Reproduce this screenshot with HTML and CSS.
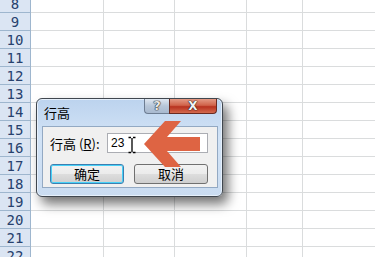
FILE: index.html
```html
<!DOCTYPE html>
<html lang="zh">
<head>
<meta charset="UTF-8">
<title>行高</title>
<link rel="stylesheet" href="styles.css">
</head>
<body>
<div class="sheet">
    <div class="row"><div class="num">8</div><div class="c c1"></div><div class="c c2"></div><div class="c c3"></div><div class="c c4"></div><div class="c c5"></div></div>
    <div class="row"><div class="num">9</div><div class="c c1"></div><div class="c c2"></div><div class="c c3"></div><div class="c c4"></div><div class="c c5"></div></div>
    <div class="row"><div class="num">10</div><div class="c c1"></div><div class="c c2"></div><div class="c c3"></div><div class="c c4"></div><div class="c c5"></div></div>
    <div class="row"><div class="num">11</div><div class="c c1"></div><div class="c c2"></div><div class="c c3"></div><div class="c c4"></div><div class="c c5"></div></div>
    <div class="row"><div class="num">12</div><div class="c c1"></div><div class="c c2"></div><div class="c c3"></div><div class="c c4"></div><div class="c c5"></div></div>
    <div class="row"><div class="num">13</div><div class="c c1"></div><div class="c c2"></div><div class="c c3"></div><div class="c c4"></div><div class="c c5"></div></div>
    <div class="row"><div class="num">14</div><div class="c c1"></div><div class="c c2"></div><div class="c c3"></div><div class="c c4"></div><div class="c c5"></div></div>
    <div class="row"><div class="num">15</div><div class="c c1"></div><div class="c c2"></div><div class="c c3"></div><div class="c c4"></div><div class="c c5"></div></div>
    <div class="row"><div class="num">16</div><div class="c c1"></div><div class="c c2"></div><div class="c c3"></div><div class="c c4"></div><div class="c c5"></div></div>
    <div class="row"><div class="num">17</div><div class="c c1"></div><div class="c c2"></div><div class="c c3"></div><div class="c c4"></div><div class="c c5"></div></div>
    <div class="row"><div class="num">18</div><div class="c c1"></div><div class="c c2"></div><div class="c c3"></div><div class="c c4"></div><div class="c c5"></div></div>
    <div class="row"><div class="num">19</div><div class="c c1"></div><div class="c c2"></div><div class="c c3"></div><div class="c c4"></div><div class="c c5"></div></div>
    <div class="row"><div class="num">20</div><div class="c c1"></div><div class="c c2"></div><div class="c c3"></div><div class="c c4"></div><div class="c c5"></div></div>
    <div class="row"><div class="num">21</div><div class="c c1"></div><div class="c c2"></div><div class="c c3"></div><div class="c c4"></div><div class="c c5"></div></div>
    <div class="row"><div class="num">22</div><div class="c c1"></div><div class="c c2"></div><div class="c c3"></div><div class="c c4"></div><div class="c c5"></div></div>
</div>

<div class="dialog">
    <div class="titlebar">
        <span class="title">行高</span>
        <div class="caption-btns">
            <div class="btn-help">?</div>
            <div class="btn-close">X</div>
        </div>
    </div>
    <div class="panel">
        <div class="field">
            <label for="height">行高 (<u>R</u>):</label>
            <input type="text" id="height" value="23">
        </div>
        <div class="actions">
            <button class="focused">确定</button>
            <button>取消</button>
        </div>
    </div>
</div>

<!-- flecha y cursor encima del dialogo -->
<svg class="overlay" width="375" height="257" viewBox="0 0 375 257">
    <path d="M128.5 137.5 H131 M133 137.5 H135.5 M132 138 V152 M128.5 152.5 H131 M133 152.5 H135.5" stroke="#000" stroke-width="1.3" fill="none"/>
    <path d="M144 144 L165 121 L181 121 L167 137 L200 137 L200 151 L167 151 L181 167 L165 167 Z" fill="#de6443"/>
</svg>
</body>
</html>
```

FILE: styles.css
```css
body {
    margin: 0;
    width: 375px;
    height: 257px;
    overflow: hidden;
    background: #fff;
    font-family: "Noto Sans CJK SC", "Liberation Sans", sans-serif;
    position: relative;
}

.sheet {
    margin-top: -5px;
}

.row {
    display: flex;
    height: 18px;
}

.num {
    width: 31px;
    flex: none;
    background-color: #dbe5f3;
    border-right: 1px solid #9eb6ce;
    border-bottom: 1px solid #9eb6ce;
    box-sizing: border-box;
    height: 18px;
    text-align: center;
    font-family: "DejaVu Sans Mono", monospace;
    font-size: 14px;
    line-height: 18px;
    color: #27416d;
}

.c {
    flex: none;
    height: 18px;
    box-sizing: border-box;
    border-right: 1px solid #dadcdd;
    border-bottom: 1px solid #dadcdd;
}

.c1 { width: 73px; }
.c2 { width: 71px; }
.c3 { width: 72px; }
.c4 { width: 56px; }
.c5 { flex: 1; border-right: none; }

.dialog {
    position: absolute;
    left: 36px;
    top: 98px;
    width: 187px;
    height: 99px;
    box-sizing: border-box;
    border: 1px solid #40474f;
    border-radius: 6px;
    background: linear-gradient(#bcd3ee, #d2e3f6 40%, #cadcf1);
    box-shadow: 5px 7px 12px rgba(0, 0, 0, 0.55), inset 0 0 0 1px #e6f0fb;
    padding: 0 4px 8px 5px;
    display: flex;
    flex-direction: column;
}

.titlebar {
    height: 27px;
    display: flex;
    justify-content: space-between;
    align-items: flex-start;
}

.title {
    font-size: 13px;
    color: #000;
    margin: 5px 0 0 2px;
    line-height: 17px;
}

.caption-btns {
    display: flex;
    margin-right: 1px;
}

.btn-help {
    width: 25px;
    height: 15px;
    box-sizing: border-box;
    border: 1px solid #6d7d92;
    border-top: none;
    border-right: none;
    border-radius: 0 0 0 4px;
    background: linear-gradient(#dfe7f1, #b7c6d8 50%, #a8b9cf);
    color: #e8e8e8;
    font-family: "DejaVu Sans", sans-serif;
    font-weight: bold;
    font-size: 13px;
    line-height: 14px;
    text-align: center;
    text-shadow: 0 0 1px #222, 0 0 1px #222, 0 0 1px #222;
}

.btn-close {
    width: 48px;
    height: 15px;
    box-sizing: border-box;
    border: 1px solid #6a2a20;
    border-top: none;
    border-radius: 0 0 4px 0;
    background: linear-gradient(#e49a85, #d0634a 45%, #b8321f 55%, #d36a4e);
    color: #f4f4f4;
    font-family: "DejaVu Sans", sans-serif;
    font-weight: bold;
    font-size: 12px;
    line-height: 14px;
    text-align: center;
    text-shadow: 0 0 1px #222, 0 0 1px #222, 0 0 1px #222;
}

.panel {
    flex: 1;
    background-color: #f0f0f0;
    border: 1px solid #93a9c3;
    padding: 6px 9px 0 7px;
}

.field {
    display: flex;
    align-items: center;
    height: 20px;
}

label {
    font-size: 13px;
    color: #000;
    width: 57px;
    white-space: nowrap;
}

input[type="text"] {
    width: 101px;
    height: 20px;
    box-sizing: border-box;
    border: 1px solid #abadb3;
    background-color: #fff;
    font-family: "Liberation Sans", sans-serif;
    font-size: 12px;
    padding: 0 3px;
    color: #000;
    outline: none;
}

.actions {
    display: flex;
    gap: 10px;
    margin-top: 11px;
}

button {
    width: 74px;
    height: 20px;
    box-sizing: border-box;
    border: 1px solid #707070;
    border-radius: 3px;
    background: linear-gradient(#f2f2f2, #ebebeb 50%, #dddddd 50%, #cfcfcf);
    font-family: "Noto Sans CJK SC", sans-serif;
    font-size: 13px;
    line-height: 16px;
    color: #000;
    padding: 0;
}

button.focused {
    border-color: #3c7fb1;
    box-shadow: inset 0 0 0 1px #48d1f7;
}

.overlay {
    position: absolute;
    left: 0;
    top: 0;
}
```
